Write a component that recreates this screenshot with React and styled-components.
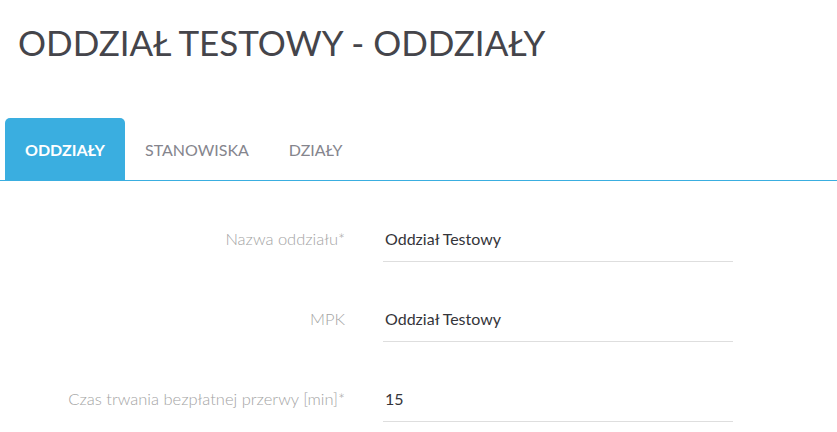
import React from "react";
import styled, { createGlobalStyle } from "styled-components";

const Global = createGlobalStyle`
  html, body { margin: 0; padding: 0; background: #fff; }
  body { font-family: Lato, "Open Sans", sans-serif; }
`;

const Page = styled.div`
  width: 837px;
`;

const Title = styled.h1`
  margin: 21px 0 0 18px;
  font-size: 35px;
  font-weight: 400;
  line-height: 1.2;
  color: #45454b;
`;

const TabBar = styled.nav`
  display: flex;
  margin-top: 55px;
  padding-left: 5px;
  border-bottom: 1px solid #3aaee0;
`;

const Tab = styled.a`
  display: flex;
  align-items: center;
  height: 62px;
  padding: 0 20px;
  border-radius: 5px 5px 0 0;
  font-size: 16px;
  font-weight: ${(p) => (p.$active ? 700 : 400)};
  color: ${(p) => (p.$active ? "#fff" : "#85858d")};
  background: ${(p) => (p.$active ? "#3aaee0" : "transparent")};
  text-transform: uppercase;
  text-decoration: none;
`;

const Form = styled.form`
  display: grid;
  grid-template-columns: 345px 350px;
  column-gap: 38px;
  row-gap: 39px;
  padding-top: 40px;
`;

const Label = styled.label`
  display: flex;
  align-items: center;
  justify-content: flex-end;
  height: 36px;
  font-size: 16.5px;
  font-weight: 300;
  color: #a4a4a4;
`;

const Input = styled.input`
  box-sizing: border-box;
  height: 41px;
  width: 350px;
  border: none;
  border-bottom: 1px solid #dedede;
  padding: 0 2px 6px;
  font-family: Lato, "Open Sans", sans-serif;
  font-size: 16px;
  font-weight: 400;
  color: #35353a;
  background: transparent;
  outline: none;
`;

const rows = [
  { label: "Nazwa oddziału*", value: "Oddział Testowy" },
  { label: "MPK", value: "Oddział Testowy" },
  { label: "Czas trwania bezpłatnej przerwy [min]*", value: "15" },
];

export default function App() {
  return (
    <Page>
      <Global />
      <Title>ODDZIAŁ TESTOWY - ODDZIAŁY</Title>
      <TabBar>
        <Tab $active>Oddziały</Tab>
        <Tab>Stanowiska</Tab>
        <Tab>Działy</Tab>
      </TabBar>
      <Form>
        {rows.map((r) => (
          <React.Fragment key={r.label}>
            <Label>{r.label}</Label>
            <Input defaultValue={r.value} readOnly />
          </React.Fragment>
        ))}
      </Form>
    </Page>
  );
}
